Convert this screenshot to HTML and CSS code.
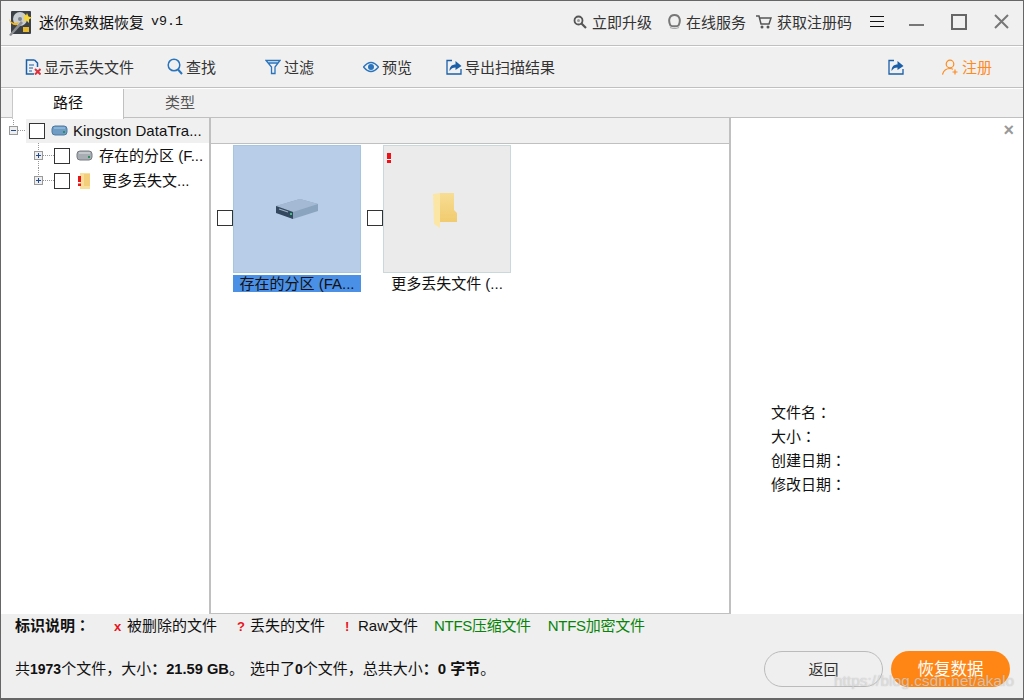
FILE: index.html
```html
<!DOCTYPE html>
<html lang="zh-CN">
<head>
  <meta charset="UTF-8">
  <title>迷你兔数据恢复</title>
  <link rel="stylesheet" href="styles.css">
</head>
<body>

<div class="window">

  <div class="titlebar">
    <svg class="app-icon" width="24" height="26" viewBox="0 0 24 26">
      <rect x="2" y="1" width="20" height="23" rx="1" fill="#3b4147"/>
      <circle cx="11" cy="9" r="7" fill="#c9ced4"/>
      <circle cx="11" cy="9" r="2" fill="#7b8289"/>
      <path d="M0 25 L12 11 L14 13 L2 26 Z" fill="#8d8f92"/>
      <path d="M0 9 Q4 15 10 12 L8 15 Q2 16 0 9 Z" fill="#f1b51c"/>
      <path d="M18 3 l1.500 3.500 3.500 1 -3 2 0 3.500 -2.500 -2.500 -3.500 1 1.500 -3.500 -2 -3 3.500 .5 Z" fill="#f7d73a"/>
      <rect x="14" y="17" width="6" height="5" fill="#e9b92c"/>
    </svg>
    <span class="app-name">迷你兔数据恢复</span>
    <span class="app-version">v9.1</span>

    <div class="title-actions">
      <span class="title-link title-link-upgrade">
        <svg width="14" height="14" viewBox="0 0 14 14"><circle cx="5.500" cy="5.500" r="4" fill="none" stroke="#555" stroke-width="1.800"/><circle cx="5.500" cy="5.500" r="1.500" fill="#999"/><path d="M8.500 8.500 L13 13" stroke="#555" stroke-width="2.200"/></svg>
        立即升级
      </span>
      <span class="title-link">
        <svg width="13" height="15" viewBox="0 0 13 15"><path d="M2.500 11.500 C0 7 1 1 6.500 1 C12 1 13 7 10.500 11.500 C9 12.500 4 12.500 2.500 11.500 Z" fill="none" stroke="#777" stroke-width="2"/><path d="M2 13.500 Q6.500 15.500 11 13.500" fill="none" stroke="#aaa" stroke-width="1.200"/></svg>
        在线服务
      </span>
      <span class="title-link">
        <svg width="16" height="14" viewBox="0 0 16 14"><path d="M0 1 H3 L5 9 H13 L15 3 H4" fill="none" stroke="#555" stroke-width="1.500"/><circle cx="6" cy="12" r="1.500" fill="#555"/><circle cx="12" cy="12" r="1.500" fill="#555"/></svg>
        获取注册码
      </span>
    </div>

    <div class="menu-icon"><i></i><i></i><i></i></div>

    <svg class="win-btn win-min" width="15" height="15" viewBox="0 0 15 15"><path d="M0 11 H15" stroke="#777" stroke-width="2"/></svg>
    <svg class="win-btn win-max" width="16" height="16" viewBox="0 0 16 16"><rect x="1" y="1" width="14" height="14" fill="none" stroke="#666" stroke-width="2"/></svg>
    <svg class="win-btn win-close" width="15" height="15" viewBox="0 0 15 15"><path d="M1 1 L14 14 M14 1 L1 14" stroke="#777" stroke-width="2"/></svg>
  </div>

  <div class="toolbar">
    <span class="tool">
      <svg width="16" height="16" viewBox="0 0 16 16"><path d="M9.500 1 H1.500 V15 H9 M9.500 1 L12.500 4 V8" fill="none" stroke="#1a5fa8" stroke-width="1.500"/><path d="M4 6 H9 M4 9 H8 M4 12 H7" stroke="#1a5fa8" stroke-width="1.200"/><path d="M10 10 L15.500 15.500 M15.500 10 L10 15.500" stroke="#d9333f" stroke-width="2"/></svg>
      显示丢失文件
    </span>
    <span class="tool tool-find">
      <svg width="16" height="17" viewBox="0 0 16 17"><circle cx="7" cy="7" r="5.800" fill="none" stroke="#2a74bd" stroke-width="1.500"/><path d="M11 11.500 L15 16" stroke="#2a74bd" stroke-width="2"/></svg>
      查找
    </span>
    <span class="tool tool-wide">
      <svg width="16" height="16" viewBox="0 0 16 16"><path d="M1 1.500 H15 L10 8 V14.500 H6.500 V8 Z M3 4 H13" fill="none" stroke="#2a74bd" stroke-width="1.300"/></svg>
      过滤
    </span>
    <span class="tool tool-wide">
      <svg width="16" height="12" viewBox="0 0 16 12"><path d="M.5 6 Q8 -3 15.500 6 Q8 15 .5 6 Z" fill="none" stroke="#2a74bd" stroke-width="1.300"/><circle cx="8" cy="6" r="3" fill="#2a74bd"/></svg>
      预览
    </span>
    <span class="tool tool-export">
      <svg width="16" height="16" viewBox="0 0 16 16"><path d="M6 1.500 H1 V15 H15 V10" fill="none" stroke="#1a5fa8" stroke-width="1.300"/><path d="M3.500 12 C3.500 7.500 6 5.500 9.500 5.500 V2 L15.500 7 L9.500 11 V8.500 C7 8.500 5 9.500 3.500 12 Z" fill="#1a5fa8"/></svg>
      导出扫描结果
    </span>

    <span class="tool tool-share">
      <svg width="16" height="16" viewBox="0 0 16 16"><path d="M6 1.500 H1 V15 H15 V10" fill="none" stroke="#1a5fa8" stroke-width="1.300"/><path d="M3.500 12 C3.500 7.500 6 5.500 9.500 5.500 V2 L15.500 7 L9.500 11 V8.500 C7 8.500 5 9.500 3.500 12 Z" fill="#1a5fa8"/></svg>
    </span>
    <span class="tool tool-register">
      <svg width="16" height="16" viewBox="0 0 16 16"><circle cx="8" cy="5" r="3.800" fill="none" stroke="#ff8a1e" stroke-width="1.200"/><path d="M.5 15.500 C1.500 11.500 4 9.500 8 9.500 C9 9.500 10 9.700 11 10.200" fill="none" stroke="#ff8a1e" stroke-width="1.200"/><path d="M10.500 13 H15.500 M13 10.500 V15.500" stroke="#ff8a1e" stroke-width="1.200"/></svg>
      注册
    </span>
  </div>

  <div class="tabs">
    <span class="tab tab-active">路径</span>
    <span class="tab">类型</span>
  </div>

  <div class="main">

    <div class="tree">
      <div class="tree-row tree-row-root">
        <svg class="tree-lines" width="28" height="25" viewBox="0 0 28 25"><path d="M12.500 0 V8 M17 12.500 H25" stroke="#999" stroke-dasharray="1 1"/><rect x="8.500" y="8.500" width="8" height="8" fill="#eee" stroke="#999"/><path d="M10 12.500 H15" stroke="#224a8c"/></svg>
        <span class="check"></span>
        <svg class="tree-icon" width="17" height="11" viewBox="0 0 17 11"><rect x="1" y="1" width="15" height="9" rx="3" fill="#6f9cc4" stroke="#4d7aa3"/><path d="M3 3 H14" stroke="#a9cbe6"/><rect x="12" y="6" width="2" height="2" fill="#2f8f5a"/></svg>
        <span class="tree-text">Kingston DataTra...</span>
      </div>
      <div class="tree-row tree-row-child">
        <svg class="tree-lines" width="53" height="25" viewBox="0 0 53 25"><path d="M37.500 0 V25 M42 12.500 H53" stroke="#999" stroke-dasharray="1 1"/><rect x="33.500" y="8.500" width="8" height="8" fill="#eee" stroke="#999"/><path d="M35 12.500 H40 M37.500 10 V15" stroke="#224a8c"/></svg>
        <span class="check"></span>
        <svg class="tree-icon" width="17" height="11" viewBox="0 0 17 11"><rect x="1" y="1" width="15" height="9" rx="3" fill="#a8adb3" stroke="#777c82"/><path d="M3 3 H14" stroke="#dfe2e5"/><rect x="12" y="6" width="2" height="2" fill="#2f8f5a"/></svg>
        <span class="tree-text">存在的分区 (F...</span>
      </div>
      <div class="tree-row tree-row-child">
        <svg class="tree-lines" width="53" height="25" viewBox="0 0 53 25"><path d="M37.500 0 V8 M42 12.500 H53" stroke="#999" stroke-dasharray="1 1"/><rect x="33.500" y="8.500" width="8" height="8" fill="#eee" stroke="#999"/><path d="M35 12.500 H40 M37.500 10 V15" stroke="#224a8c"/></svg>
        <span class="check"></span>
        <svg class="tree-icon tree-icon-folder" width="14" height="16" viewBox="0 0 14 16"><path d="M3 0 H13 V16 H3 Z" fill="#f8df9c"/><path d="M7 1 H13 V13 H7 Z" fill="#f3cf7c"/><path d="M1 3 H4 V9 H1 Z M1 10.500 H4 V13 H1 Z" fill="#e8141c"/></svg>
        <span class="tree-text tree-text-lost">更多丢失文...</span>
      </div>
    </div>

    <div class="content">
      <div class="content-head"></div>
      <div class="thumbs">
        <div class="thumb-item">
          <span class="check"></span>
          <div class="thumb-col">
            <div class="thumb thumb-selected">
              <svg width="42" height="20" viewBox="0 0 42 20">
                <path d="M0 7 L24 0 L42 5 L42 12 L17 20 L0 13 Z" fill="#8aa3bf"/>
                <path d="M0 7 L24 0 L42 5 L17 13 Z" fill="#a4bad4"/>
                <path d="M0 7 L17 13 L17 20 L0 14 Z" fill="#34495f"/>
                <path d="M3 10 L12 13" stroke="#9fb2c6" stroke-width="1.200"/>
                <rect x="14" y="14" width="2" height="2" fill="#3fbf7f"/>
              </svg>
            </div>
            <div class="thumb-label thumb-label-selected">存在的分区 (FA...</div>
          </div>
        </div>
        <div class="thumb-item">
          <span class="check"></span>
          <div class="thumb-col">
            <div class="thumb thumb-lost">
              <span class="lost-mark"></span>
              <svg class="thumb-folder" width="25" height="35" viewBox="0 0 25 35">
                <defs>
                  <linearGradient id="folderBack" x1="0" y1="0" x2="0" y2="1">
                    <stop offset="0" stop-color="#f7dd94"/>
                    <stop offset="1" stop-color="#f1cb6e"/>
                  </linearGradient>
                </defs>
                <path d="M7 0 H21 V17 L24 20 V29 H7 Z" fill="url(#folderBack)"/>
                <path d="M0 1 L7 0 V35 L1 31 Z" fill="#fbe6a6"/>
              </svg>
            </div>
            <div class="thumb-label">更多丢失文件 (...</div>
          </div>
        </div>
      </div>
    </div>

    <div class="details">
      <span class="details-close">×</span>
      <div class="details-list">
        <div class="details-row">文件名<span class="colon" lang="zh-TW">：</span></div>
        <div class="details-row">大小<span class="colon" lang="zh-TW">：</span></div>
        <div class="details-row">创建日期<span class="colon" lang="zh-TW">：</span></div>
        <div class="details-row">修改日期<span class="colon" lang="zh-TW">：</span></div>
      </div>
    </div>
  </div>

  <div class="bottom">
    <div class="legend">
      <b class="legend-title">标识说明<span class="colon" lang="zh-TW">：</span></b>
      <span class="legend-item legend-first"><b class="mark">x</b>被删除的文件</span>
      <span class="legend-item"><b class="mark">?</b>丢失的文件</span>
      <span class="legend-item legend-raw"><b class="mark">!</b>Raw文件</span>
      <span class="legend-item legend-green">NTFS压缩文件</span>
      <span class="legend-item legend-green">NTFS加密文件</span>
    </div>
    <div class="status-row">
      <div class="status">共<b class="num">1973</b>个文件，大小<b>：<span class="size">21.59 GB</span></b>。<span class="status-sel">选中了</span><b class="num">0</b>个文件，总共大小<b>：0 字节</b>。</div>
      <button class="btn btn-back">返回</button>
      <button class="btn btn-recover">恢复数据</button>
    </div>
  </div>

  <span class="watermark">https://blog.csdn.net/akalo</span>
</div>

</body>
</html>
```

FILE: styles.css
```css
* {
  box-sizing: border-box;
}

body {
  margin: 0;
  background: #f0f0f0;
  font-family: "Liberation Sans", "Noto Sans CJK SC", sans-serif;
  font-size: 15px;
  color: #222;
}

.window {
  position: relative;
  width: 1024px;
  height: 700px;
  display: flex;
  flex-direction: column;
  border: 1px solid #666;
  border-bottom-width: 2px;
  background: #f0f0f0;
  overflow: hidden;
}

.colon {
  font-family: "Noto Sans CJK TC", sans-serif;
  line-height: 1;
}

/* title bar */
.titlebar {
  height: 45px;
  flex: none;
  display: flex;
  align-items: center;
  padding: 0 0 3px 8px;
  border-bottom: 1px solid #c0c0c0;
  color: #333;
}

.app-icon {
  flex: none;
  margin-top: 2px;
}

.app-name {
  margin-left: 6px;
  color: #111;
}

.app-version {
  margin-left: 7px;
  font-family: "Liberation Mono", monospace;
  font-size: 13.3px;
  color: #111;
}

.title-actions {
  margin-left: auto;
  display: flex;
  gap: 10px;
}

.title-link {
  display: flex;
  align-items: center;
  gap: 5px;
}

.title-link-upgrade {
  margin-right: 6px;
}

.menu-icon {
  margin-left: 18px;
  width: 14px;
  display: flex;
  flex-direction: column;
  gap: 4px;
}

.menu-icon i {
  height: 1px;
  background: #111;
}

.win-btn {
  flex: none;
}

.win-min {
  margin-left: 25px;
}

.win-max {
  margin-left: 27px;
}

.win-close {
  margin-left: 27px;
  margin-right: 14px;
}

/* toolbar */
.toolbar {
  height: 42px;
  flex: none;
  display: flex;
  align-items: center;
  padding: 0 0 1px 24px;
  border-top: 1px solid #fff;
  border-bottom: 1px solid #c0c0c0;
  color: #333;
}

.tool {
  display: flex;
  align-items: center;
  gap: 3px;
  margin-left: 35px;
}

.tool:first-child {
  margin-left: 0;
}

.tool-find {
  margin-left: 33px;
}

.tool-wide {
  margin-left: 49px;
}

.tool-export {
  margin-left: 34px;
}

.tool-share {
  margin-left: auto;
}

.tool-register {
  margin-left: 38px;
  margin-right: 31px;
  gap: 4px;
  color: #ff8a1e;
}

/* tabs */
.tabs {
  height: 30px;
  flex: none;
  display: flex;
  padding-left: 11px;
  border-top: 1px solid #fff;
  border-bottom: 1px solid #c0c0c0;
}

.tab {
  width: 112px;
  display: flex;
  align-items: center;
  justify-content: center;
  padding-bottom: 4px;
  color: #555;
}

.tab-active {
  height: 30px;
  padding-bottom: 6px;
  background: #fff;
  border-left: 1px solid #c8c8c8;
  border-right: 1px solid #c0c0c0;
  color: #111;
  position: relative;
}

/* main area */
.main {
  flex: 1;
  display: flex;
  min-height: 0;
  background: #fff;
}

.tree {
  width: 210px;
  flex: none;
  border-right: 2px solid #c0c0c0;
}

.tree-row {
  height: 25px;
  display: flex;
  align-items: center;
  white-space: nowrap;
  color: #111;
}

.tree-row-root {
  background: linear-gradient(to right, #fff 25px, #f0f0f0 25px);
}

.tree-lines {
  flex: none;
}

.tree-icon {
  margin-left: 6px;
  flex: none;
}

.tree-text {
  margin-left: 5px;
}

.tree-row-child .tree-text {
  margin-left: 6px;
  margin-bottom: 2px;
}

.tree-row-child .tree-icon-folder {
  margin-left: 7px;
}

.tree-row-child .tree-text-lost {
  margin-left: 11px;
}

.check {
  width: 16px;
  height: 16px;
  flex: none;
  background: #fff;
  border: 1px solid #333;
}

.content {
  flex: 1;
  display: flex;
  flex-direction: column;
  border-right: 2px solid #c0c0c0;
  border-bottom: 1px solid #c0c0c0;
}

.content-head {
  height: 26px;
  flex: none;
  background: #f0f0f0;
  border-bottom: 1px solid #c0c0c0;
}

.thumbs {
  display: flex;
  gap: 6px;
  padding: 1px 0 0 6px;
}

.thumb-item {
  display: flex;
  align-items: flex-start;
}

.thumb-item .check {
  margin-top: 65px;
}

.thumb-col {
  width: 128px;
}

.thumb {
  position: relative;
  height: 128px;
  display: flex;
  align-items: center;
  justify-content: center;
  border: 1px solid #c9d8d8;
  background: #ebebeb;
}

.thumb-selected {
  background: #b8cde8;
  border-color: #a5c5e0;
}

.thumb-folder {
  margin-top: 2px;
  margin-right: 3px;
}

.lost-mark {
  position: absolute;
  left: 3px;
  top: 7px;
  width: 4px;
  height: 10px;
  background: linear-gradient(to bottom, #f01018 6px, #fff 6px, #fff 7px, #f01018 7px);
}

.thumb-label {
  height: 17px;
  margin-top: 2px;
  line-height: 17px;
  text-align: center;
  white-space: nowrap;
  color: #111;
}

.thumb-label-selected {
  background: #4a90e6;
}

.details {
  position: relative;
  flex: none;
  width: 292px;
  display: flex;
  align-items: flex-end;
  padding: 0 0 117px 40px;
}

.details-close {
  position: absolute;
  top: 2px;
  right: 9px;
  font-size: 18px;
  font-weight: bold;
  color: #999;
}

.details-row {
  height: 24px;
  line-height: 24px;
  color: #111;
}

/* bottom bar */
.bottom {
  height: 84px;
  flex: none;
  background: #efefef;
  padding-left: 14px;
  color: #111;
}

.legend {
  height: 22px;
  padding-bottom: 2px;
  display: flex;
  align-items: center;
}

.legend-title {
  width: 95px;
}

.legend-item {
  margin-right: 20px;
}

.legend-first {
  margin-left: 4px;
}

.legend-raw {
  margin-right: 16px;
}

.mark {
  display: inline-block;
  width: 13px;
  font-size: 13px;
  color: #e8141c;
}

.legend-green {
  color: #078407;
  margin-right: 17px;
  letter-spacing: -.3px;
}

.status-row {
  display: flex;
  align-items: center;
  margin-top: 15px;
}

.status {
  flex: 1;
  margin-bottom: 3px;
}

.num {
  font-size: 14px;
}

.size {
  font-size: 14.67px;
}

.status-sel {
  margin-left: 6px;
}

.btn {
  width: 119px;
  height: 36px;
  padding: 0 0 2px;
  border-radius: 18px;
  font-family: inherit;
  font-size: 15px;
  border: 1px solid #bbb;
  background: #efefef;
  color: #333;
}

.btn-recover {
  margin-left: 8px;
  margin-right: 13px;
  border: 0;
  background: #ff8614;
  color: #fff;
  font-size: 16.5px;
}

.watermark {
  position: absolute;
  right: 9px;
  bottom: 8px;
  font-size: 15.5px;
  color: rgba(255, 255, 255, .5);
  text-shadow: 0 0 1px rgba(120, 120, 120, .55);
}
```
